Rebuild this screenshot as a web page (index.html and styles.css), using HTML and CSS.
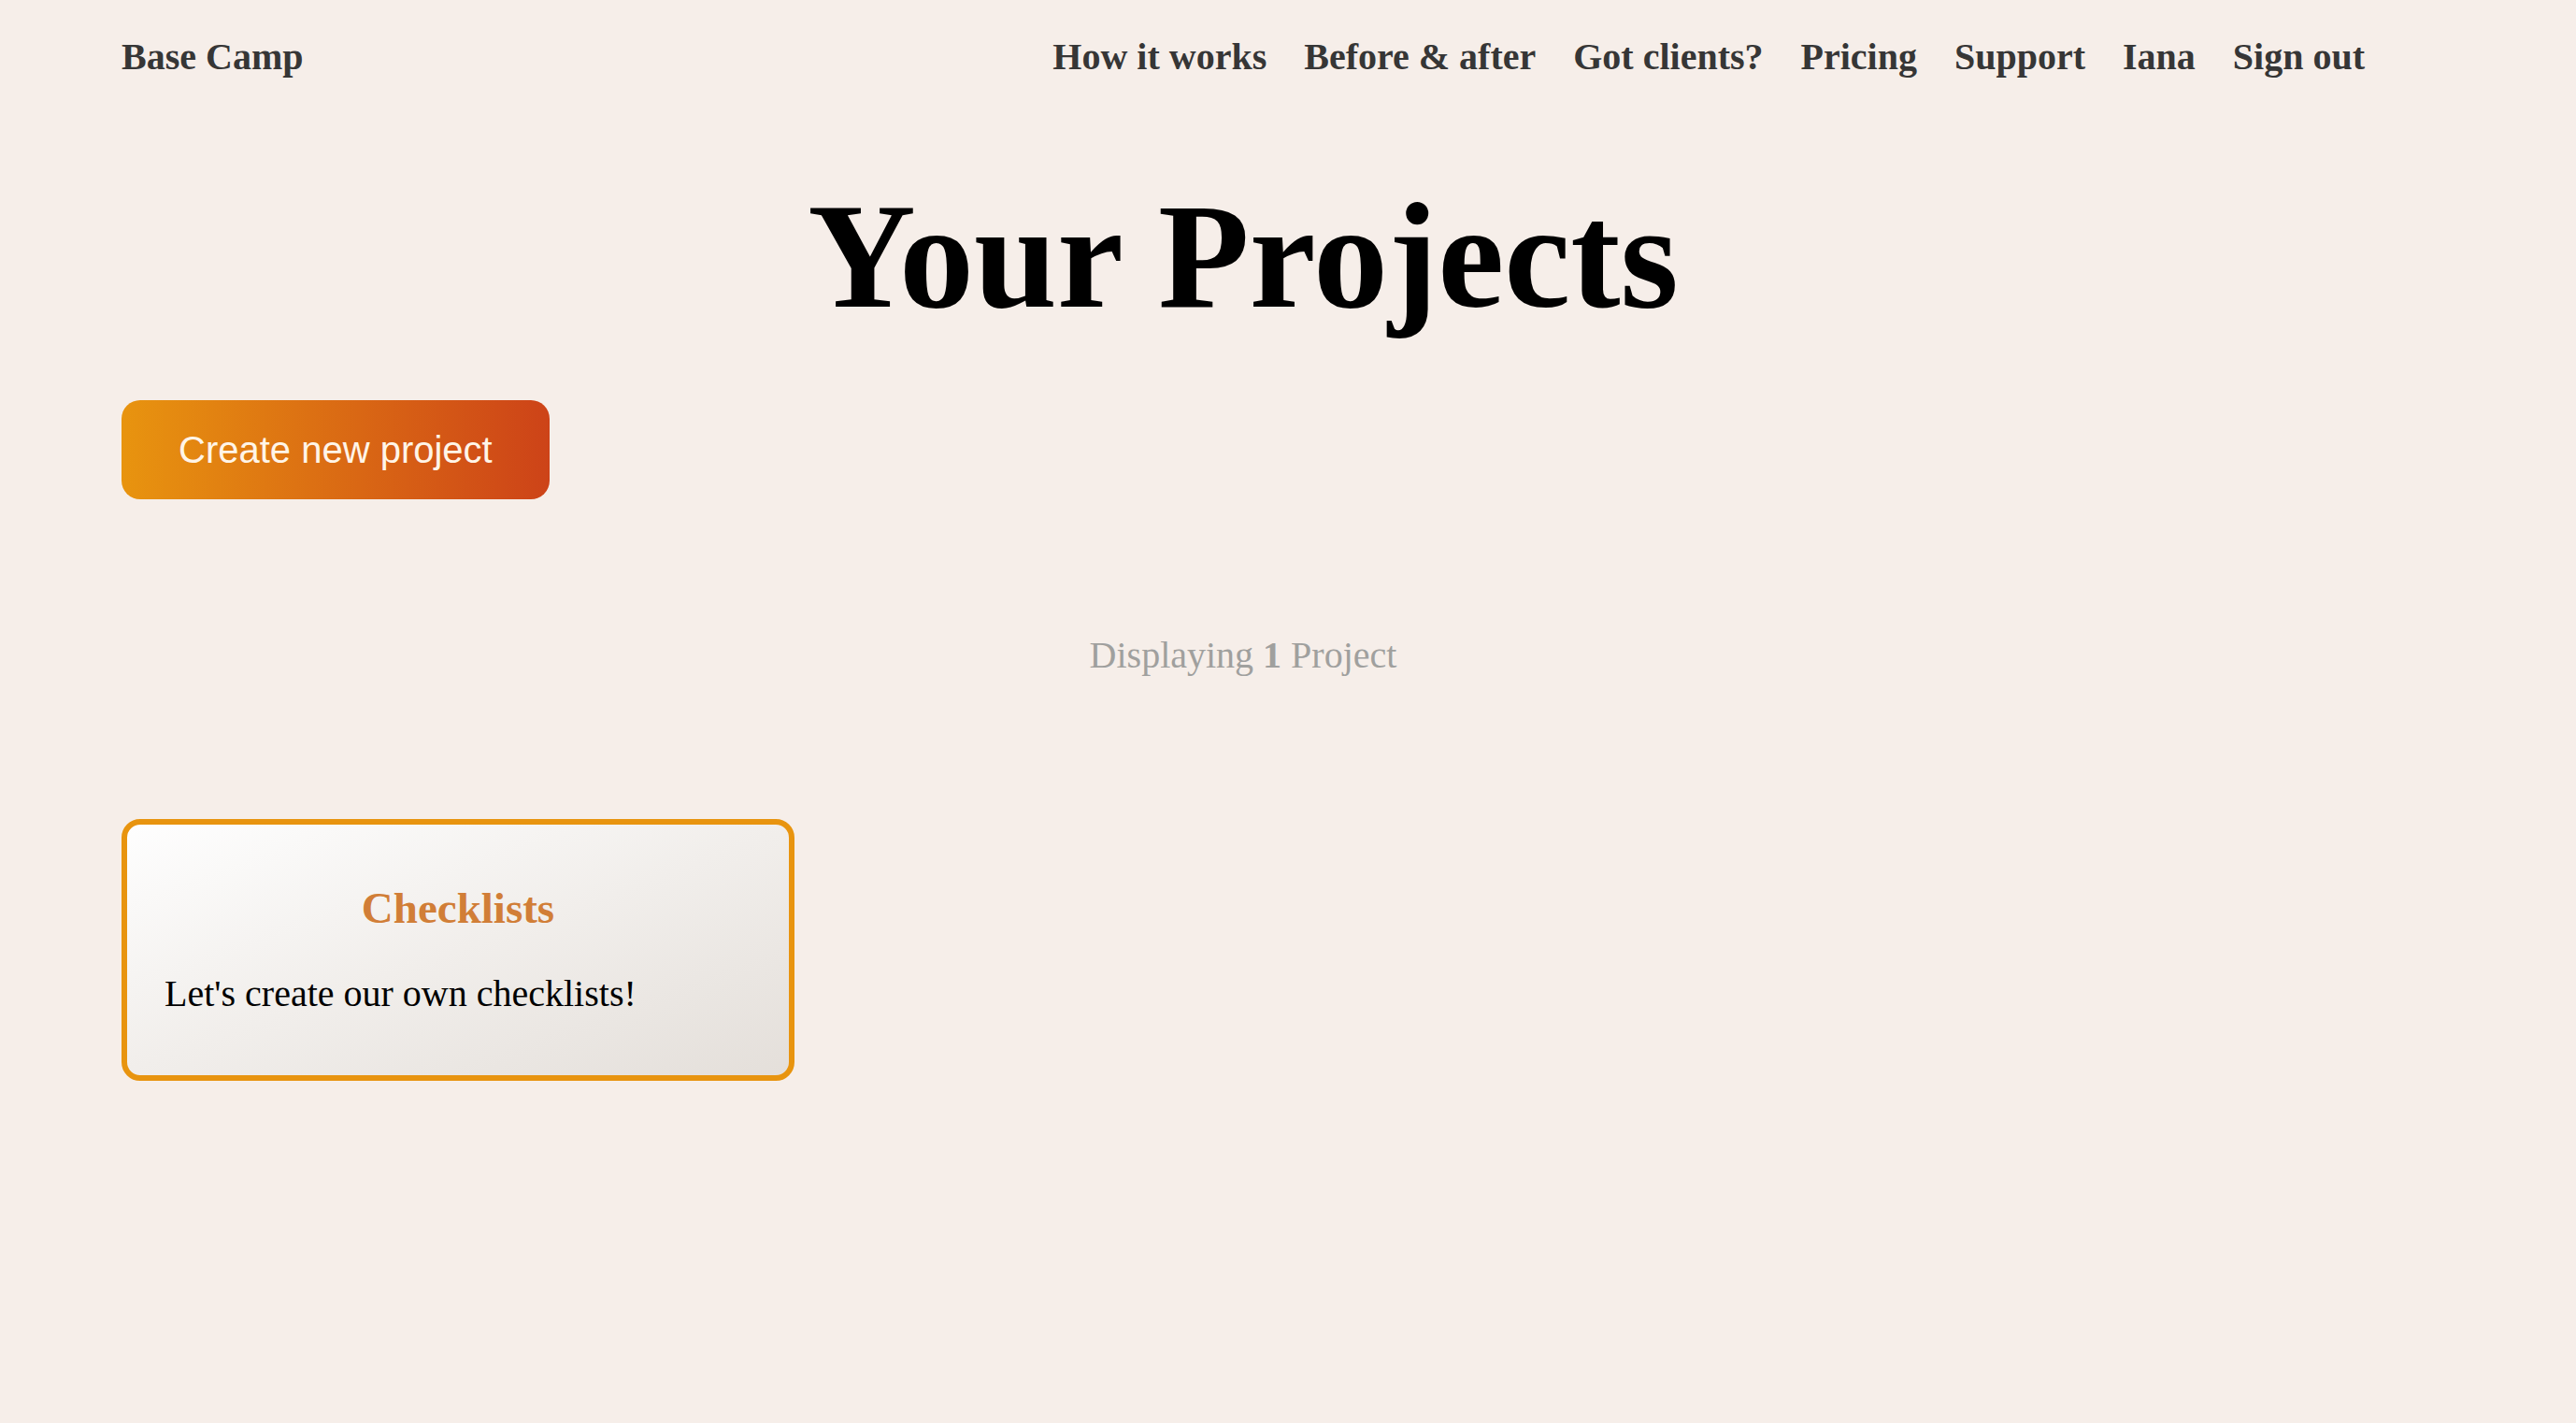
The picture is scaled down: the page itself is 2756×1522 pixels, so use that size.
FILE: index.html
```html
<!DOCTYPE html>
<html lang="en">
<head>
  <meta charset="utf-8">
  <meta name="viewport" content="width=device-width, initial-scale=1">
  <title>Base Camp</title>
  <link rel="stylesheet" href="styles.css">
</head>
<body>
  <header class="site-header">
    <a class="nav-link" href="#">Base Camp</a>
    <nav class="site-nav">
      <a class="nav-link" href="#">How it works</a>
      <a class="nav-link" href="#">Before &amp; after</a>
      <a class="nav-link" href="#">Got clients?</a>
      <a class="nav-link" href="#">Pricing</a>
      <a class="nav-link" href="#">Support</a>
      <a class="nav-link" href="#">Iana</a>
      <a class="nav-link" href="#">Sign out</a>
    </nav>
  </header>
  <main>
    <h1 class="page-title">Your Projects</h1>
    <button class="create-button" type="button">Create new project</button>
    <p class="project-count">Displaying <b>1</b> Project</p>
    <section class="projects">
      <article class="project-card">
        <h3 class="project-name"><a class="project-link" href="#">Checklists</a></h3>
        <p class="project-text">Let's create our own checklists!</p>
      </article>
    </section>
  </main>
</body>
</html>
```
FILE: styles.css
```css
* {
  box-sizing: border-box;
}

body {
  margin: 0;
  padding: 38px 226px 38px 130px;
  background: #f6eee9;
  color: #000;
  font-family: "Liberation Serif", "Times New Roman", serif;
  font-size: 40px;
  line-height: 46px;
}

.site-header {
  display: flex;
  flex-wrap: wrap;
  justify-content: space-between;
}

.site-nav {
  display: flex;
  flex-wrap: wrap;
  gap: 40px;
}

.nav-link {
  color: #363636;
  font-weight: bold;
  text-decoration: none;
}

.page-title {
  margin: 98px 0 62px;
  font-size: 160px;
  line-height: 184px;
  text-align: center;
}

.create-button {
  display: block;
  padding: 30px 61px;
  border: 0;
  border-radius: 20px;
  background: linear-gradient(to right, #e8940f, #cd4318);
  color: #fff5e8;
  font-family: "Liberation Sans", Arial, sans-serif;
  font-size: 40px;
  line-height: 46px;
  cursor: pointer;
}

.project-count {
  margin: 144px 0 152px;
  color: #a0a09e;
  text-align: center;
}

.projects {
  display: grid;
  grid-template-columns: repeat(3, 30%);
  justify-content: space-between;
}

.project-card {
  padding: 62px 40px 64px;
  border: 6px solid #e8940f;
  border-radius: 20px;
  background: linear-gradient(160deg, #fefefe, #f1eeeb 50%, #e4dfda) padding-box;
}

.project-name {
  margin: 0 0 42px;
  font-size: 47px;
  line-height: 54px;
  text-align: center;
}

.project-link {
  color: #d17e37;
  text-decoration: none;
}

.project-text {
  margin: 0;
}
```
